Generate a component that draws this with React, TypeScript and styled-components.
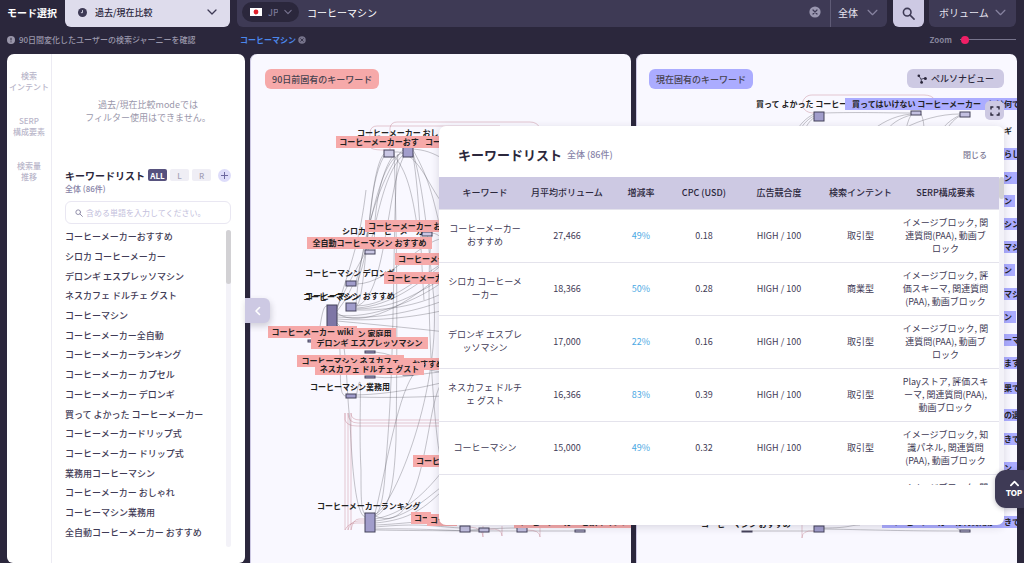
import React, { useState } from "react";
import styled, { createGlobalStyle, css } from "styled-components";

const ink = "#2b273c";
const lilac = "#cdc9e3";
const pink = "#f6a9a9";
const blue = "#abacff";

const GlobalStyle = createGlobalStyle`
  *, *::before, *::after { box-sizing: border-box; }
  body {
    margin: 0;
    background: ${ink};
    color: ${ink};
    font-family: "Noto Sans CJK JP", "Noto Sans", sans-serif;
    font-size: 9px;
    line-height: 13px;
  }
  button, input, select {
    font: inherit;
    color: inherit;
    border: 0;
    margin: 0;
    padding: 0;
    background: none;
  }
`;

const Page = styled.div`
  position: relative;
  height: 100vh;
  display: flex;
  flex-direction: column;
  overflow: hidden;
`;

const TopBar = styled.header`
  display: flex;
  align-items: stretch;
  height: 27px;
  padding: 0 8px 0 7px;
  font-size: 10px;
`;

const ModeLabel = styled.label`
  width: 58px;
  display: flex;
  align-items: center;
  padding-bottom: 2px;
  color: #fff;
  font-weight: 700;
`;

const SelectWrap = styled.div<{ $tone: "light" | "dark" | "pill" }>`
  display: flex;
  align-items: center;
  justify-content: space-between;
  select {
    appearance: none;
    flex: 1;
    min-width: 0;
    outline: 0;
  }
  svg {
    flex: none;
  }
  ${(p) =>
    p.$tone === "light" &&
    css`
      width: 165px;
      margin-right: 7px;
      padding: 0 13px 3px;
      gap: 8px;
      border-radius: 0 0 6px 6px;
      background: #dedcec;
      color: ${ink};
      font-size: 9px;
      font-weight: 500;
    `}
  ${(p) =>
    p.$tone === "dark" &&
    css`
      padding: 0 10px 3px;
      border-radius: 0 0 6px 6px;
      background: #3e3a55;
      color: #e6e4f0;
    `}
  ${(p) =>
    p.$tone === "pill" &&
    css`
      width: 57px;
      height: 20px;
      padding: 0 7px 0 8px;
      gap: 6px;
      border-radius: 10px;
      background: ${ink};
      color: #7a7693;
      font-size: 9px;
      font-weight: 500;
    `}
`;

const SearchBox = styled.div`
  flex: 1;
  display: flex;
  align-items: center;
  padding: 0 9px 3px 5px;
  border-radius: 0 0 0 6px;
  background: #3e3a55;
  color: #fff;
  input {
    flex: 1;
    margin-left: 8px;
    outline: 0;
  }
`;

const ScopeWrap = styled(SelectWrap)`
  width: 57px;
  padding: 0 9px 3px 7px;
  border-left: 1px solid #5f5b76;
  border-radius: 0 0 6px 0;
`;

const SearchButton = styled.button`
  width: 31px;
  margin: 0 5px 0 6px;
  display: grid;
  place-items: center;
  border-radius: 0 0 6px 6px;
  background: ${lilac};
`;

const VolumeWrap = styled(SelectWrap)`
  width: 87px;
`;

const IconButton = styled.button`
  display: grid;
  place-items: center;
`;

const InfoBar = styled.div`
  display: flex;
  align-items: center;
  height: 27px;
  padding: 0 8px 2px 7px;
  color: #9a97ab;
  font-size: 8px;
  font-weight: 500;
`;

const InfoNote = styled.p`
  display: flex;
  align-items: center;
  gap: 4px;
  width: 233px;
  margin: 0;
`;

const Tag = styled.span`
  flex: 1;
  display: flex;
  align-items: center;
  gap: 2px;
  color: #4b88ec;
  font-weight: 700;
`;

const ZoomLabel = styled.label`
  display: flex;
  align-items: center;
  gap: 8px;
  font-weight: 700;
  color: #86839a;
`;

const ZoomRange = styled.input`
  appearance: none;
  width: 56px;
  height: 8px;
  background: linear-gradient(#77748c, #77748c) center / 100% 1px no-repeat;
  &::-webkit-slider-thumb {
    appearance: none;
    width: 8px;
    height: 8px;
    border-radius: 50%;
    background: #f01f66;
  }
`;

const Main = styled.main`
  flex: 1;
  min-height: 0;
  display: flex;
  gap: 5px;
  padding: 0 7px;
`;

const Sidebar = styled.aside`
  width: 238px;
  display: flex;
  border-radius: 7px 7px 6px 6px;
  background: #fff;
`;

const Rail = styled.nav`
  width: 45px;
  display: flex;
  flex-direction: column;
  align-items: center;
  gap: 23px;
  padding-top: 16px;
  border-right: 1px solid #ecebf3;
`;

const RailButton = styled.button`
  color: #b9b6ca;
  font-size: 8px;
  font-weight: 500;
  line-height: 11px;
  white-space: pre-line;
`;

const SideBody = styled.div`
  flex: 1;
  min-width: 0;
  display: flex;
  flex-direction: column;
  padding: 44px 14px 16px 13px;
`;

const FilterNote = styled.p`
  height: 70px;
  margin: 0;
  color: #9a97ab;
  text-align: center;
`;

const ListHead = styled.div`
  display: flex;
  align-items: center;
  gap: 3px;
  height: 14px;
`;

const ListTitle = styled.h2`
  margin: 0;
  white-space: nowrap;
  font-size: 10px;
  font-weight: 700;
`;

const Chip = styled.button<{ $active?: boolean }>`
  width: 19px;
  height: 12px;
  border-radius: 2px;
  font-size: 8px;
  line-height: 11px;
  font-weight: ${(p) => (p.$active ? 700 : 500)};
  color: ${(p) => (p.$active ? "#fff" : "#a5a2b8")};
  background: ${(p) => (p.$active ? "#57527e" : "#efeef5")};
`;

const AddButton = styled(IconButton)`
  width: 13px;
  height: 13px;
  margin-left: auto;
  border-radius: 50%;
  background: #dddcfa;
`;

const Count = styled.span<{ $size: number }>`
  color: #8884a8;
  font-size: ${(p) => p.$size}px;
  font-weight: 500;
`;

const KeywordSearch = styled.label`
  display: flex;
  align-items: center;
  gap: 3px;
  height: 23px;
  margin-top: 6px;
  padding: 0 9px;
  border: 1px solid #e9e7f2;
  border-radius: 6px;
  input {
    flex: 1;
    min-width: 0;
    outline: 0;
    font-size: 8px;
  }
  input::placeholder {
    color: #c3c0dc;
  }
`;

const ListArea = styled.div`
  flex: 1;
  min-height: 0;
  display: flex;
  justify-content: space-between;
  margin-top: 3px;
`;

const KeywordItems = styled.ul`
  display: flex;
  flex-direction: column;
  margin: 0;
  padding: 0 0 5px;
  list-style: none;
  li {
    flex: 1;
    display: flex;
    align-items: center;
    color: #3f3b56;
    font-weight: 500;
    white-space: nowrap;
  }
`;

const Track = styled.div<{ $thumb: number }>`
  width: 5px;
  margin-top: 3px;
  border-radius: 3px;
  background: #f3f2f8;
  &::before {
    content: "";
    display: block;
    height: ${(p) => p.$thumb}px;
    border-radius: 3px;
    background: #d2d1d4;
  }
`;

const GraphPanel = styled.section`
  position: relative;
  flex: 1;
  min-width: 0;
  overflow: hidden;
  border-radius: 7px 7px 0 0;
  background: #f9f8ff;
  box-shadow: inset 1px 0 ${lilac};
`;

const PanelHead = styled.div`
  position: relative;
  display: flex;
  justify-content: space-between;
  align-items: flex-start;
  padding: 15px 13px 0;
`;

const Badge = styled.h2<{ $color: string; $indent?: number }>`
  margin: 0 0 0 ${(p) => p.$indent ?? 0}px;
  padding: 4px 7px 3px;
  border-radius: 6px;
  background: ${(p) => p.$color};
  color: #47424f;
  font-size: 9px;
  font-weight: 500;
`;

const PersonaButton = styled.button`
  display: flex;
  align-items: center;
  gap: 4px;
  height: 19px;
  padding: 0 10px;
  border-radius: 6px;
  background: ${lilac};
  font-weight: 500;
`;

const ExpandButton = styled(IconButton)`
  position: absolute;
  top: 47px;
  right: 13px;
  width: 19px;
  height: 19px;
  border-radius: 5px;
  background: ${lilac};
`;

const Diagram = styled.svg`
  position: absolute;
  top: 0;
  left: 0;
  text {
    font-size: 8px;
    font-weight: 700;
    fill: #222;
  }
`;

const CollapseButton = styled(IconButton)`
  position: absolute;
  top: 298px;
  left: 245px;
  width: 25px;
  height: 25px;
  border-radius: 0 6px 6px 0;
  background: ${lilac};
  box-shadow: 1px 3px 6px rgba(43, 39, 60, 0.2);
`;

const Modal = styled.section`
  position: absolute;
  top: 126px;
  right: 20px;
  width: 565px;
  padding-bottom: 40px;
  border-radius: 7px;
  background: #fff;
  box-shadow: 0 2px 8px rgba(43, 39, 60, 0.16);
`;

const ModalHead = styled.header`
  display: flex;
  align-items: center;
  gap: 5px;
  height: 51px;
  padding: 6px 17px 0 19px;
  h2 {
    margin: 0;
    font-size: 13px;
    font-weight: 700;
  }
`;

const CloseButton = styled.button`
  margin-left: auto;
  color: #77738f;
  font-size: 8px;
  font-weight: 500;
`;

const TableArea = styled.div`
  display: flex;
  height: 308px;
  overflow: hidden;
`;

const TableTrack = styled(Track)`
  margin: 0;
  border-radius: 0;
`;

const Table = styled.table`
  flex: 1;
  height: max-content;
  table-layout: fixed;
  border-collapse: collapse;
  text-align: center;
  th {
    height: 32px;
    padding: 0 0 1px;
    background: ${lilac};
    font-weight: 500;
    white-space: nowrap;
  }
  td {
    height: 53px;
    padding: 6px 0 7px;
    border-top: 1px solid #e4e3ec;
    color: #3f3b56;
    line-break: loose;
  }
  td:first-child {
    padding: 6px 8px 7px;
  }
  td:last-child {
    padding: 6px 10px 7px;
  }
`;

const Rate = styled.td`
  && {
    color: #4ba9e4;
  }
`;

const TopButton = styled.button`
  position: absolute;
  right: -9px;
  bottom: 55px;
  width: 38px;
  height: 38px;
  display: flex;
  flex-direction: column;
  align-items: center;
  justify-content: center;
  border-radius: 11px;
  background: #3e3a55;
  color: #fff;
  font-family: Inter, sans-serif;
  font-size: 8px;
  font-weight: 800;
  line-height: 11px;
  box-shadow: 0 1px 5px rgba(43, 39, 60, 0.3);
`;

function Chevron({ dir = "down", size = 10, color, weight = 1.3 }: { dir?: "down" | "up" | "left"; size?: number; color: string; weight?: number }) {
  const d = { down: "M1 3l4 4 4-4", up: "M1 7l4-4 4 4", left: "M6.5 1.5L3 5l3.500 3.500" }[dir];
  return (
    <svg width={size} height={size} viewBox="0 0 10 10" fill="none" stroke={color} strokeWidth={weight} strokeLinecap="round" strokeLinejoin="round" aria-hidden>
      <path d={d} />
    </svg>
  );
}

function ClearIcon({ size, fill, mark }: { size: number; fill: string; mark: string }) {
  return (
    <svg width={size} height={size} viewBox="0 0 12 12" aria-hidden>
      <circle cx="6" cy="6" r="5.6" fill={fill} />
      <path d="M4 4l4 4M8 4l-4 4" stroke={mark} strokeWidth="1.2" strokeLinecap="round" />
    </svg>
  );
}

function Magnifier({ size, color, weight }: { size: number; color: string; weight: number }) {
  return (
    <svg width={size} height={size} viewBox="0 0 14 14" fill="none" stroke={color} strokeWidth={weight} strokeLinecap="round" aria-hidden>
      <circle cx="5.6" cy="5.6" r="4.1" />
      <path d="M8.7 8.7L13 13" />
    </svg>
  );
}

type LabelSpec = { t: string; x: number; y: number; w?: number; box?: boolean; mid?: boolean; pad?: number };
type NodeSpec = [x: number, y: number, w: number, h: number, fill?: string];

const leftLabels: LabelSpec[] = [
  { t: "コーヒーメーカー おしゃれ", x: 357, y: 133 },
  { t: "コーヒーメーカー", x: 422, y: 142, w: 60, box: true },
  { t: "コーヒーメーカーおす", x: 336, y: 142, w: 86, box: true, mid: true },
  { t: "シロカ コーヒーメーカー", x: 342, y: 231 },
  { t: "コーヒーメーカー おすすめ", x: 365, y: 226, w: 110, box: true },
  { t: "全自動コーヒーマシン おすすめ", x: 307, y: 243, w: 125, box: true, mid: true },
  { t: "コーヒーメーカー", x: 395, y: 259, w: 80, box: true },
  { t: "コーヒーマシン デロンギ", x: 305, y: 273 },
  { t: "コーヒーメーカー", x: 384, y: 278, w: 80, box: true },
  { t: "コーヒーマシン", x: 303, y: 297 },
  { t: "コーヒーマシン おすすめ", x: 305, y: 296 },
  { t: "ン 家庭用", x: 353, y: 334, w: 43, box: true, mid: true },
  { t: "コーヒーメーカー wiki", x: 268, y: 332, w: 89, box: true, mid: true },
  { t: "デロンギ エスプレッソマシン", x: 311, y: 343, w: 117, box: true, mid: true },
  { t: "おすすめ", x: 404, y: 364, w: 44, box: true, pad: 8 },
  { t: "コーヒーマシン ネスカフェ", x: 297, y: 361, w: 107, box: true, mid: true },
  { t: "ネスカフェ ドルチェ グスト", x: 315, y: 369, w: 109, box: true, mid: true },
  { t: "コーヒーマシン業務用", x: 310, y: 387 },
  { t: "コーヒーメーカー", x: 413, y: 461, w: 60, box: true },
  { t: "コーヒーメーカーランキング", x: 317, y: 506 },
  { t: "コー", x: 411, y: 518, w: 20, box: true },
  { t: "コーヒー", x: 427, y: 520, w: 30, box: true },
  { t: "コーヒーメーカー こ飲みマシン", x: 514, y: 522, w: 117, box: true, mid: true },
];

const leftNodes: NodeSpec[] = [
  [384, 150, 10, 7, "#cac7e4"], [403, 147, 10, 10], [422, 232, 10, 4, "#cac7e4"], [365, 250, 10, 4, "#cac7e4"],
  [346, 281, 10, 5], [346, 303, 10, 8], [327, 305, 10, 22, "#7e76a6"], [308, 340, 10, 2], [346, 343, 10, 2, "#cac7e4"],
  [365, 351, 10, 2], [365, 376, 10, 2], [403, 374, 10, 1], [346, 394, 10, 4], [365, 513, 10, 19],
  [460, 526, 10, 6, "#c3c0e0"], [479, 528, 10, 4, "#c3c0e0"], [517, 525, 10, 7, "#c3c0e0"], [575, 530, 10, 2, "#cac7e4"],
];

const leftLinks = [
  "M384 154C368 170 366 300 357 305", "M384 156C366 190 374 240 357 283", "M394 155C380 170 372 220 375 250",
  "M403 155C382 175 376 230 368 250", "M404 156C386 190 386 300 356 306", "M394 153C396 200 398 300 396 440C394 490 388 512 375 516",
  "M398 154C392 220 396 350 386 460C384 500 380 512 375 515", "M394 156C406 170 412 190 418 232", "M413 150C430 180 434 200 445 250",
  "M413 153C424 190 428 240 434 300", "M413 155C420 200 420 240 424 300", "M394 152C416 150 426 180 440 200", "M413 149C424 150 432 152 445 160",
  "M337 307C350 280 356 270 365 253", "M337 309C352 260 360 240 366 190", "M337 311C354 290 350 283 357 284",
  "M337 313C360 330 410 305 445 270", "M337 315C370 320 420 300 445 280", "M337 317C380 320 420 310 445 300",
  "M337 319C380 322 420 316 445 310", "M337 321C380 325 430 330 445 332", "M357 306C390 305 420 276 445 262",
  "M357 308C390 306 420 284 445 262", "M357 309C400 308 420 290 445 278", "M357 310C400 311 430 300 445 292", "M357 284C390 283 420 240 445 238",
  "M337 323C346 330 340 344 347 344", "M337 325C348 340 346 394 350 420C352 470 356 514 365 517", "M318 341C322 310 324 306 327 306",
  "M337 325C344 360 336 396 346 396", "M357 395C390 394 420 388 445 382", "M357 397C390 398 420 397 445 396",
  "M356 398C364 350 358 420 361 470C361 500 361 512 366 515", "M375 352C400 354 420 372 445 372", "M375 377C400 380 425 372 445 372",
  "M432 235C424 280 434 430 440 456", "M432 233C440 234 440 239 445 239", "M434 300C440 400 390 512 375 514",
  "M445 380C424 390 430 540 375 516", "M375 519C400 514 420 500 445 468", "M375 521C405 518 420 504 445 484", "M375 523C410 520 425 508 445 488",
  "M375 525C400 524 410 522 445 520", "M375 527C420 523 430 526 460 528", "M375 529C420 528 450 531 479 531",
  "M375 530C430 531 510 531 575 531", "M470 530C490 529 500 528 517 528", "M413 375C396 400 384 480 375 513",
  "M356 304C364 200 400 150 403 150", "M356 282C372 220 380 158 403 153",
];

const leftRed = [
  "M384 150C364 150 370 145 370 132Q371 126 377 126H500", "M390 150V128Q391 122 397 122H530Q537 122 540 128",
  "M345 413V420Q347 426 357 426H445", "M348 413Q348 423 358 423H445", "M351 413Q351 420 360 420H445",
  "M345 413V530M348 413V530M351 413V530", "M345 530Q348 523 356 523H365M348 530Q350 521 358 521H365M351 530Q353 519 359 519H365",
  "M470 527Q483 528 483 537V526M489 529Q502 528 502 536V526M527 530Q540 530 540 537V526",
];

const edge = (t: string, y: number, w = 20): LabelSpec => ({ t, x: 1001, y, w, box: true });

const rightLabels: LabelSpec[] = [
  { t: "買って よかった コーヒーメーカー", x: 756, y: 104 },
  { t: "とは何で", x: 985, y: 104, w: 40, box: true },
  { t: "買ってはいけない コーヒーメーカー", x: 845, y: 104, w: 143, box: true, mid: true },
  { t: "ギ", x: 1004, y: 131 },
  edge("らし", 154), edge("ン", 178), edge("ン", 201, 14), edge("シン", 224), edge("マシ", 247), edge("ン", 270, 14),
  edge("マシン", 294), edge("ン", 317, 15), edge("ーマ", 340), edge("ます", 363), edge("果で", 388), edge("の選", 415),
  edge("きで", 439), edge("ン", 468),
  { t: "コーヒーマシン おすすめ", x: 701, y: 524 },
  { t: "コーヒーメーカー は何費用が", x: 882, y: 522, w: 121, box: true, mid: true },
  edge("きで", 522),
];

const rightNodes: NodeSpec[] = [
  [814, 112, 10, 9], [911, 111, 10, 4, "#c3c0e0"], [960, 112, 10, 5, "#c3c0e0"],
  [742, 531, 10, 1], [814, 526, 10, 6], [960, 530, 10, 2, "#c3c0e0"],
];

const rightLinks = [
  "M814 114C806 118 800 124 796 132", "M814 116C806 120 802 126 799 132", "M814 118C810 120 806 126 804 132",
  "M824 113C860 112 890 113 911 113", "M911 114C892 116 880 124 870 132", "M911 115C900 118 890 124 886 132", "M911 115C908 120 906 128 906 132",
  "M921 114C924 120 924 128 924 132", "M960 114C940 114 920 120 905 128", "M960 115C950 120 944 126 940 132", "M960 116C952 120 948 128 944 132",
  "M752 531C780 531 790 531 814 531", "M824 528C850 528 850 525 860 525", "M824 529C880 530 900 531 960 531", "M960 530C956 528 954 526 952 524",
];

const rightRed = [
  "M814 113C798 113 800 95 812 95H924Q932 95 935 100", "M802 524V538Q802 530 814 531",
];

function Sankey({ x, labels, nodes, links, red, color }: { x: number; labels: LabelSpec[]; nodes: NodeSpec[]; links: string[]; red: string[]; color: string }) {
  return (
    <Diagram width="381" height="509" viewBox={`${x} 54 381 509`}>
      <g fill="none" stroke="#55535c" strokeOpacity="0.42" strokeWidth="0.8">
        {links.map((d, i) => <path key={i} d={d} />)}
      </g>
      <g fill="none" stroke="#b86a78" strokeOpacity="0.5" strokeWidth="0.7">
        {red.map((d, i) => <path key={i} d={d} />)}
      </g>
      {nodes.map(([nx, ny, w, h, fill = "#a19dcb"], i) => (
        <rect key={i} x={nx} y={ny} width={w} height={h} fill={fill} stroke="#45425a" strokeWidth="1" />
      ))}
      {labels.map((l, i) => (
        <g key={i}>
          {l.box && <rect x={l.x} y={l.y - 6} width={l.w} height="12" fill={color} />}
          <text
            x={l.mid ? l.x + (l.w ?? 0) / 2 : l.x + (l.box ? l.pad ?? 3 : 0)}
            y={l.y + 3}
            textAnchor={l.mid ? "middle" : "start"}
          >
            {l.t}
          </text>
        </g>
      ))}
    </Diagram>
  );
}

const keywords = [
  "コーヒーメーカーおすすめ", "シロカ コーヒーメーカー", "デロンギ エスプレッソマシン", "ネスカフェ ドルチェ グスト",
  "コーヒーマシン", "コーヒーメーカー全自動", "コーヒーメーカーランキング", "コーヒーメーカー カプセル",
  "コーヒーメーカー デロンギ", "買って よかった コーヒーメーカー", "コーヒーメーカードリップ式", "コーヒーメーカー ドリップ式",
  "業務用コーヒーマシン", "コーヒーメーカー おしゃれ", "コーヒーマシン業務用", "全自動コーヒーメーカー おすすめ",
];

const columns: [string, number][] = [
  ["キーワード", 92], ["月平均ボリューム", 72], ["増減率", 76], ["CPC (USD)", 50],
  ["広告競合度", 100], ["検索インテント", 63], ["SERP構成要素", 107],
];

const rows = [
  ["コーヒーメーカーおすすめ", "27,466", "49%", "0.18", "HIGH / 100", "取引型", "イメージブロック, 関連質問(PAA), 動画ブロック"],
  ["シロカ コーヒーメーカー", "18,366", "50%", "0.28", "HIGH / 100", "商業型", "イメージブロック, 評価スキーマ, 関連質問(PAA), 動画ブロック"],
  ["デロンギ エスプレッソマシン", "17,000", "22%", "0.16", "HIGH / 100", "取引型", "イメージブロック, 関連質問(PAA), 動画ブロック"],
  ["ネスカフェ ドルチェ グスト", "16,366", "83%", "0.39", "HIGH / 100", "取引型", "Playストア, 評価スキーマ, 関連質問(PAA), 動画ブロック"],
  ["コーヒーマシン", "15,000", "49%", "0.32", "HIGH / 100", "取引型", "イメージブロック, 知識パネル, 関連質問(PAA), 動画ブロック"],
  ["", "", "", "", "", "", "イメージブロック, 関連質問(PAA), 動画ブロック"],
];

export default function App() {
  const [zoom, setZoom] = useState(2);
  return (
    <Page>
      <GlobalStyle />
      <TopBar>
        <ModeLabel htmlFor="mode">モード選択</ModeLabel>
        <SelectWrap $tone="light">
          <svg width="9" height="9" viewBox="0 0 10 10" aria-hidden>
            <circle cx="5" cy="5" r="5" fill="#3e3a55" />
            <path d="M5 2.4V5.2H3.2" fill="none" stroke="#dedcec" />
          </svg>
          <select id="mode"><option>過去/現在比較</option></select>
          <Chevron color="#3e3a55" />
        </SelectWrap>
        <SearchBox>
          <SelectWrap $tone="pill">
            <svg width="12" height="8" viewBox="0 0 12 8" aria-hidden>
              <rect width="12" height="8" fill="#fff" />
              <circle cx="6" cy="4" r="2.4" fill="#e0202c" />
            </svg>
            <select aria-label="国"><option>JP</option></select>
            <Chevron color="#7a7693" size={8} />
          </SelectWrap>
          <input type="text" aria-label="キーワード" defaultValue="コーヒーマシン" />
          <IconButton aria-label="クリア"><ClearIcon size={12} fill="#9a97b0" mark="#3e3a55" /></IconButton>
        </SearchBox>
        <ScopeWrap $tone="dark">
          <select aria-label="範囲"><option>全体</option></select>
          <Chevron color="#8783a0" size={11} weight={1.1} />
        </ScopeWrap>
        <SearchButton aria-label="検索"><Magnifier size={13} color="#3e3a55" weight={1.7} /></SearchButton>
        <VolumeWrap $tone="dark">
          <select aria-label="並び順"><option>ボリューム</option></select>
          <Chevron color="#8783a0" size={11} weight={1.1} />
        </VolumeWrap>
      </TopBar>
      <InfoBar>
        <InfoNote>
          <svg width="8" height="8" viewBox="0 0 8 8" aria-hidden>
            <circle cx="4" cy="4" r="4" fill="#9a97ab" />
            <path d="M4 1.8v2.6M4 5.4v.9" stroke={ink} />
          </svg>
          90日間変化したユーザーの検索ジャーニーを確認
        </InfoNote>
        <Tag>
          コーヒーマシン
          <IconButton aria-label="削除"><ClearIcon size={8} fill="#77748c" mark={ink} /></IconButton>
        </Tag>
        <ZoomLabel>
          Zoom
          <ZoomRange type="range" min={0} max={100} value={zoom} onChange={(e) => setZoom(Number(e.target.value))} />
        </ZoomLabel>
      </InfoBar>
      <Main>
        <Sidebar>
          <Rail>
            <RailButton>{"検索\nインテント"}</RailButton>
            <RailButton>{"SERP\n構成要素"}</RailButton>
            <RailButton>{"検索量\n推移"}</RailButton>
          </Rail>
          <SideBody>
            <FilterNote>過去/現在比較modeでは<br />フィルター使用はできません。</FilterNote>
            <ListHead>
              <ListTitle>キーワードリスト</ListTitle>
              <Chip $active>ALL</Chip>
              <Chip>L</Chip>
              <Chip>R</Chip>
              <AddButton aria-label="追加">
                <svg width="7" height="7" viewBox="0 0 7 7" stroke="#6c68a0" aria-hidden><path d="M3.5 0v7M0 3.5h7" /></svg>
              </AddButton>
            </ListHead>
            <Count $size={8}>全体 (86件)</Count>
            <KeywordSearch>
              <Magnifier size={8} color="#8f8ca8" weight={1.7} />
              <input type="text" aria-label="単語" placeholder="含める単語を入力してください。" />
            </KeywordSearch>
            <ListArea>
              <KeywordItems>{keywords.map((k) => <li key={k}>{k}</li>)}</KeywordItems>
              <Track $thumb={54} />
            </ListArea>
          </SideBody>
        </Sidebar>
        <GraphPanel>
          <Sankey x={250} labels={leftLabels} nodes={leftNodes} links={leftLinks} red={leftRed} color={pink} />
          <PanelHead><Badge $color={pink} $indent={2}>90日前固有のキーワード</Badge></PanelHead>
        </GraphPanel>
        <GraphPanel>
          <Sankey x={636} labels={rightLabels} nodes={rightNodes} links={rightLinks} red={rightRed} color={blue} />
          <PanelHead>
            <Badge $color={blue}>現在固有のキーワード</Badge>
            <PersonaButton>
              <svg width="10" height="10" viewBox="0 0 10 10" fill={ink} stroke={ink} aria-hidden>
                <path d="M2 2l2 3.2 4-1M4 5.2l.6 3" fill="none" strokeWidth="0.8" />
                <circle cx="1.8" cy="1.8" r="1.3" stroke="none" />
                <circle cx="8.4" cy="4.4" r="1.5" stroke="none" />
                <circle cx="4.6" cy="8.4" r="1.4" stroke="none" />
              </svg>
              ペルソナビュー
            </PersonaButton>
          </PanelHead>
          <ExpandButton aria-label="全画面">
            <svg width="10" height="10" viewBox="0 0 10 10" fill="none" stroke={ink} strokeWidth="1.4" aria-hidden>
              <path d="M1 3.4V1h2.4M6.6 1H9v2.4M9 6.6V9H6.6M3.4 9H1V6.6" />
            </svg>
          </ExpandButton>
        </GraphPanel>
      </Main>
      <CollapseButton aria-label="閉じる"><Chevron dir="left" color="#fff" weight={1.6} /></CollapseButton>
      <Modal>
        <ModalHead>
          <h2>キーワードリスト</h2>
          <Count $size={9}>全体 (86件)</Count>
          <CloseButton>閉じる</CloseButton>
        </ModalHead>
        <TableArea>
          <Table>
            <colgroup>{columns.map(([name, w]) => <col key={name} style={{ width: w }} />)}</colgroup>
            <thead>
              <tr>{columns.map(([name]) => <th key={name} scope="col">{name}</th>)}</tr>
            </thead>
            <tbody>
              {rows.map((r, i) => (
                <tr key={i}>{r.map((c, j) => (j === 2 ? <Rate key={j}>{c}</Rate> : <td key={j}>{c}</td>))}</tr>
              ))}
            </tbody>
          </Table>
          <TableTrack $thumb={22} />
        </TableArea>
      </Modal>
      <TopButton>
        <Chevron dir="up" color="#fff" size={9} weight={2} />
        TOP
      </TopButton>
    </Page>
  );
}
